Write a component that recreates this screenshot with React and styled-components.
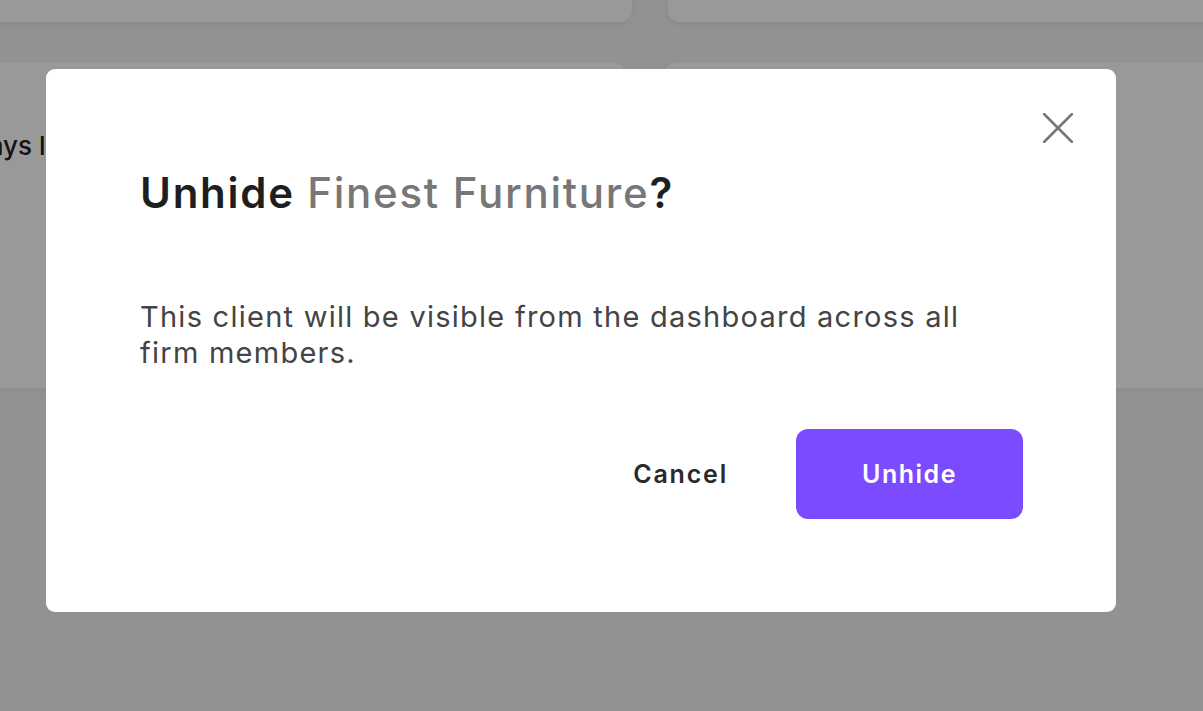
import styled, { createGlobalStyle } from "styled-components";

const GlobalStyle = createGlobalStyle`
  html, body {
    margin: 0;
    padding: 0;
    background: #f3f3f3;
    font-family: Inter, "Liberation Sans", sans-serif;
    overflow: hidden;
  }
`;

const Page = styled.div`
  width: 1300px;
  height: 711px;
  display: flex;
  flex-direction: column;
  gap: 40px;
  margin-left: -60px;
`;

const Row = styled.div`
  display: flex;
  gap: ${(props) => props.gap || 36}px;
`;

const Card = styled.div`
  background: #ffffff;
  border-radius: 12px;
  flex: 0 0 ${(props) => props.width}px;
  height: ${(props) => props.height}px;
  box-shadow: 0 2px 6px rgba(0, 0, 0, 0.06);
`;

const TopCard = styled(Card)`
  border-radius: 0 0 12px 12px;
  margin-top: -10px;
  height: 32px;
`;

const CardText = styled.div`
  padding-top: 68px;
  padding-left: 30px;
  font-size: 26px;
  font-weight: 500;
  color: #222;
  white-space: nowrap;
`;

const Overlay = styled.div`
  position: fixed;
  inset: 0;
  background: rgba(0, 0, 0, 0.4);
  padding: 69px 0 0 46px;
  box-sizing: border-box;
`;

const Modal = styled.div`
  width: 1070px;
  height: 543px;
  box-sizing: border-box;
  background: #ffffff;
  border-radius: 9px;
  padding: 44px 43px 93px 94px;
  display: flex;
  flex-direction: column;
`;

const Header = styled.div`
  display: flex;
  justify-content: flex-end;
`;

const CloseButton = styled.button`
  width: 30px;
  height: 30px;
  padding: 0;
  border: none;
  background: none;
  cursor: pointer;
  display: flex;
  & svg {
    display: block;
  }
`;

const Title = styled.h2`
  margin: 24px 0 0;
  font-size: 42px;
  font-weight: 600;
  line-height: 52px;
  color: #1e1e1e;
  letter-spacing: 1.75px;

  & span {
    color: #777777;
    font-weight: 500;
  }
`;

const Message = styled.p`
  margin: 80px 0 0;
  width: 850px;
  font-size: 29px;
  line-height: 36px;
  letter-spacing: 1.25px;
  color: #444444;
  font-weight: 400;
`;

const Actions = styled.div`
  margin-top: auto;
  margin-right: 50px;
  display: flex;
  justify-content: flex-end;
  align-items: center;
  gap: 68px;
`;

const TextButton = styled.button`
  border: none;
  background: none;
  padding: 0;
  font-family: inherit;
  font-size: 25px;
  font-weight: 600;
  letter-spacing: 1.8px;
  color: #2a2a2a;
  cursor: pointer;
`;

const PrimaryButton = styled.button`
  width: 227px;
  height: 90px;
  border: none;
  border-radius: 12px;
  background: #7b4bff;
  color: #ffffff;
  font-family: inherit;
  font-size: 25px;
  font-weight: 600;
  letter-spacing: 1.5px;
  cursor: pointer;
`;

const CloseIcon = () => (
  <svg width="30" height="30" viewBox="0 0 30 30">
    <path d="M1 1 L29 29 M29 1 L1 29" stroke="#777" strokeWidth="2.6" strokeLinecap="round" />
  </svg>
);

export default function App() {
  return (
    <>
      <GlobalStyle />
      <Page>
        <Row gap={36}>
          <TopCard width={692} />
          <TopCard width={572} />
        </Row>
        <Row gap={40}>
          <Card height={326} width={685}>
            <CardText>Days left</CardText>
          </Card>
          <Card height={326} width={575} />
        </Row>
      </Page>
      <Overlay>
        <Modal>
          <Header>
            <CloseButton aria-label="Close">
              <CloseIcon />
            </CloseButton>
          </Header>
          <Title>
            Unhide <span>Finest Furniture</span>?
          </Title>
          <Message>
            This client will be visible from the dashboard across all firm members.
          </Message>
          <Actions>
            <TextButton>Cancel</TextButton>
            <PrimaryButton>Unhide</PrimaryButton>
          </Actions>
        </Modal>
      </Overlay>
    </>
  );
}
